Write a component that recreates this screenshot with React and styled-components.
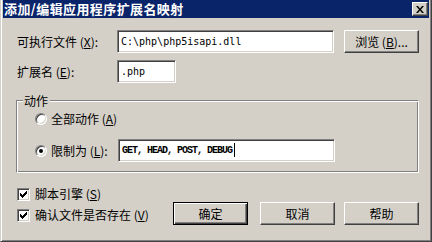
import React from "react";
import styled, { createGlobalStyle } from "styled-components";

const GlobalStyle = createGlobalStyle`
  html, body {
    margin: 0;
    padding: 0;
    background: #d4d0c8;
  }
  * {
    box-sizing: border-box;
  }
`;

const font = `"Noto Sans CJK SC", "Noto Sans", sans-serif`;

function App() {
  return (
    <>
      <GlobalStyle />
      <Window>
        <TitleBar>
          <Title>添加/编辑应用程序扩展名映射</Title>
          <CloseButton>
            <svg width="8" height="7" viewBox="0 0 8 7">
              <path d="M0 0h2l2 2.5L6 0h2L5 3.5 8 7H6L4 4.5 2 7H0l3-3.5z" fill="#000" />
            </svg>
          </CloseButton>
        </TitleBar>
        <Body>
          <Row>
            <Label $width={100}>
              可执行文件 (<u>X</u>):
            </Label>
            <Edit $width={217}>
              <Value>C:\php\php5isapi.dll</Value>
            </Edit>
            <Button $gap={10}>
              浏览 (<u>B</u>)...
            </Button>
          </Row>
          <Row $top={7}>
            <Label $width={100}>
              扩展名 (<u>E</u>):
            </Label>
            <Edit $width={59}>
              <Value>.php</Value>
            </Edit>
          </Row>
          <Group>
            <Legend>动作</Legend>
            <OptionRow>
              <Radio />
              <OptionText>
                全部动作 (<u>A</u>)
              </OptionText>
            </OptionRow>
            <OptionRow $top={12}>
              <Radio $checked />
              <OptionText $width={67}>
                限制为 (<u>L</u>):
              </OptionText>
              <Edit $width={217}>
                <Value $narrow>GET, HEAD, POST, DEBUG</Value>
                <Caret />
              </Edit>
            </OptionRow>
          </Group>
          <CheckRow $top={13}>
            <Check>
              <Tick />
            </Check>
            <OptionText>
              脚本引擎 (<u>S</u>)
            </OptionText>
          </CheckRow>
          <Footer>
            <CheckRow $top={5}>
              <Check>
                <Tick />
              </Check>
              <OptionText>
                确认文件是否存在 (<u>V</u>)
              </OptionText>
            </CheckRow>
            <Buttons>
              <Button $default>确定</Button>
              <Button $gap={12}>取消</Button>
              <Button $gap={9}>帮助</Button>
            </Buttons>
          </Footer>
        </Body>
      </Window>
    </>
  );
}

function Tick() {
  return (
    <svg width="7" height="7" viewBox="0 0 7 7">
      <path d="M0 2h1v1h1v1h1V3h1V2h1V1h1V0h1v3H6v1H5v1H4v1H3v1H2V6H1V5H0z" fill="#000" />
    </svg>
  );
}

const Window = styled.div`
  width: 432px;
  height: 242px;
  background: #d4d0c8;
  border-left: 1px solid #d4d0c8;
  border-right: 1px solid #404040;
  border-bottom: 1px solid #404040;
  padding: 0 2px 2px 1px;
  box-shadow: inset 1px 0 #ffffff, inset -1px -1px #808080;
  display: flex;
  flex-direction: column;
  font-family: ${font};
  font-size: 12px;
  color: #000;
`;

const TitleBar = styled.div`
  height: 18px;
  margin-left: 1px;
  background: #0a246a;
  display: flex;
  align-items: center;
  justify-content: space-between;
  padding: 0 1px 0 1px;
`;

const Title = styled.div`
  color: #fff;
  font-weight: 700;
  font-size: 13px;
  letter-spacing: 0.4px;
  line-height: 18px;
  white-space: nowrap;
`;

const CloseButton = styled.div`
  width: 16px;
  height: 14px;
  background: #d4d0c8;
  border: 1px solid;
  border-color: #ffffff #404040 #404040 #ffffff;
  box-shadow: inset -1px -1px #808080;
  display: flex;
  align-items: center;
  justify-content: center;
`;

const Body = styled.div`
  display: flex;
  flex-direction: column;
  padding: 12px 10px 0 15px;
`;

const Row = styled.div`
  display: flex;
  align-items: center;
  height: 23px;
  margin-top: ${(p) => p.$top || 0}px;
`;

const Label = styled.div`
  width: ${(p) => p.$width}px;
  white-space: nowrap;
  line-height: 16px;
`;

const Edit = styled.div`
  width: ${(p) => p.$width}px;
  height: 23px;
  background: #fff;
  border: 1px solid;
  border-color: #808080 #ffffff #ffffff #808080;
  box-shadow: inset 1px 1px #404040, inset -1px -1px #d4d0c8;
  display: flex;
  align-items: center;
  padding: 0 3px 1px;
`;

const Value = styled.span`
  font-family: ${(p) =>
    p.$narrow
      ? `"Liberation Mono", monospace`
      : `"DejaVu Sans Mono", "Liberation Mono", monospace`};
  font-size: 10px;
  font-weight: ${(p) => (p.$narrow ? 700 : 400)};
  letter-spacing: ${(p) => (p.$narrow ? "-1px" : "0")};
  white-space: nowrap;
`;

const Caret = styled.span`
  width: 1px;
  height: 14px;
  background: #000;
  margin-left: 2px;
`;

const Button = styled.div`
  width: 75px;
  height: 23px;
  margin-left: ${(p) => p.$gap || 0}px;
  display: flex;
  align-items: center;
  justify-content: center;
  white-space: nowrap;
  background: #d4d0c8;
  border: 1px solid;
  border-color: ${(p) =>
    p.$default ? "#000" : "#ffffff #404040 #404040 #ffffff"};
  box-shadow: ${(p) =>
    p.$default
      ? "inset 1px 1px #ffffff, inset -1px -1px #404040, inset -2px -2px #808080"
      : "inset -1px -1px #808080"};
`;

const Group = styled.div`
  position: relative;
  margin: 17px 0 0 -1px;
  width: 403px;
  height: 73px;
  border: 1px solid;
  border-color: #808080 #ffffff #ffffff #808080;
  box-shadow: inset 1px 1px #ffffff, inset -1px -1px #808080;
  padding: 10px 0 0 18px;
  display: flex;
  flex-direction: column;
`;

const Legend = styled.div`
  position: absolute;
  top: -8px;
  left: 6px;
  padding: 0 2px 0 1px;
  background: #d4d0c8;
  line-height: 16px;
`;

const OptionRow = styled.div`
  display: flex;
  align-items: center;
  min-height: 16px;
  margin-top: ${(p) => p.$top || 0}px;
`;

const Radio = styled.span`
  width: 12px;
  height: 12px;
  flex: none;
  border-radius: 50%;
  background: #fff;
  border: 1px solid;
  border-color: #808080 #ffffff #ffffff #808080;
  box-shadow: inset 1px 1px #404040, inset -1px -1px #d4d0c8;
  position: relative;
  &::after {
    content: "";
    display: ${(p) => (p.$checked ? "block" : "none")};
    position: absolute;
    left: 3px;
    top: 3px;
    width: 4px;
    height: 4px;
    border-radius: 50%;
    background: #000;
  }
`;

const OptionText = styled.span`
  margin-left: 4px;
  width: ${(p) => (p.$width ? `${p.$width}px` : "auto")};
  white-space: nowrap;
  line-height: 16px;
`;

const CheckRow = styled.div`
  display: flex;
  align-items: center;
  height: 16px;
  margin-top: ${(p) => p.$top || 0}px;
`;

const Check = styled.span`
  width: 13px;
  height: 13px;
  flex: none;
  background: #fff;
  border: 1px solid;
  border-color: #808080 #ffffff #ffffff #808080;
  box-shadow: inset 1px 1px #404040, inset -1px -1px #d4d0c8;
  display: flex;
  align-items: center;
  justify-content: center;
  margin-right: 1px;
`;

const Footer = styled.div`
  display: flex;
  align-items: flex-start;
  justify-content: space-between;
  height: 23px;
`;

const Buttons = styled.div`
  display: flex;
`;

export default App;
